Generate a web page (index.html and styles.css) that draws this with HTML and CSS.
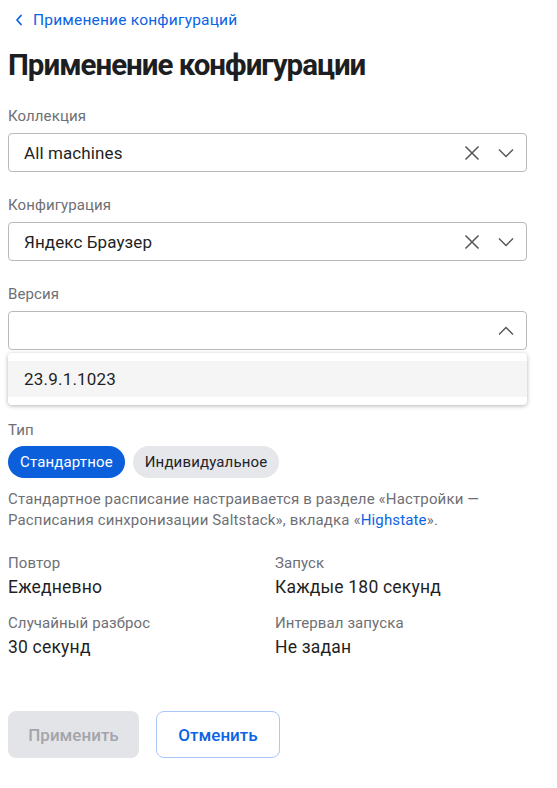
FILE: index.html
```
<!DOCTYPE html>
<html lang="ru">
<head>
<meta charset="utf-8">
<link rel="stylesheet" href="styles.css">
</head>
<body>
<div class="page">
  <a class="back" href="#">
    <svg class="back-ico" width="8" height="12" viewBox="0 0 8 12"><path d="M6 1.5L2 6l4 4.5" fill="none" stroke="currentColor" stroke-width="1.8" stroke-linecap="round" stroke-linejoin="round"/></svg>
    <span>Применение конфигураций</span>
  </a>
  <h1 class="title">Применение конфигурации</h1>

  <div class="field">
    <div class="label">Коллекция</div>
    <div class="select">
      <span class="value">All machines</span>
      <span class="icons">
        <svg width="16" height="16" viewBox="0 0 16 16"><path d="M1.5 1.5l13 13M14.5 1.5l-13 13" stroke="#555" stroke-width="1.5" fill="none"/></svg>
        <svg width="16" height="10" viewBox="0 0 16 10"><path d="M1 1.5l7 7 7-7" stroke="#555" stroke-width="1.4" fill="none"/></svg>
      </span>
    </div>
  </div>

  <div class="field">
    <div class="label">Конфигурация</div>
    <div class="select">
      <span class="value">Яндекс Браузер</span>
      <span class="icons">
        <svg width="16" height="16" viewBox="0 0 16 16"><path d="M1.5 1.5l13 13M14.5 1.5l-13 13" stroke="#555" stroke-width="1.5" fill="none"/></svg>
        <svg width="16" height="10" viewBox="0 0 16 10"><path d="M1 1.5l7 7 7-7" stroke="#555" stroke-width="1.4" fill="none"/></svg>
      </span>
    </div>
  </div>

  <div class="field field-open">
    <div class="label">Версия</div>
    <div class="select">
      <span class="value"></span>
      <span class="icons">
        <svg width="16" height="10" viewBox="0 0 16 10"><path d="M1 8.5l7-7 7 7" stroke="#555" stroke-width="1.4" fill="none"/></svg>
      </span>
    </div>
    <div class="menu">
      <div class="menu-item">23.9.1.1023</div>
    </div>
  </div>

  <div class="type">
    <div class="label">Тип</div>
    <div class="pills">
      <span class="pill pill-active">Стандартное</span>
      <span class="pill">Индивидуальное</span>
    </div>
  </div>

  <p class="note">Стандартное расписание настраивается в разделе «Настройки — Расписания синхронизации Saltstack», вкладка «<a href="#">Highstate</a>».</p>

  <div class="grid">
    <div class="item"><div class="ilabel">Повтор</div><div class="ivalue">Ежедневно</div></div>
    <div class="item"><div class="ilabel">Запуск</div><div class="ivalue">Каждые 180 секунд</div></div>
    <div class="item"><div class="ilabel">Случайный разброс</div><div class="ivalue">30 секунд</div></div>
    <div class="item"><div class="ilabel">Интервал запуска</div><div class="ivalue">Не задан</div></div>
  </div>

  <div class="buttons">
    <button class="btn btn-disabled">Применить</button>
    <button class="btn btn-outline">Отменить</button>
  </div>
</div>
</body>
</html>
```
FILE: styles.css
```
* { box-sizing: border-box; }
html, body { margin: 0; padding: 0; background: #fff; }
body { font-family: Roboto, "Noto Sans", sans-serif; color: #1f1f24; }
.page { padding: 8px 30px 0 8px; width: 557px; }

.back { display: flex; align-items: center; gap: 10px; color: #0b63e5; text-decoration: none; font-size: 15.5px; font-weight: 400; line-height: 24px; padding-left: 7px; height: 24px; letter-spacing: 0.2px; }
.back-ico { display: block; }

.title { margin: 13px 0 0; font-size: 29.5px; font-weight: 700; letter-spacing: -1px; line-height: 40px; color: #1d1e22; }

.field { margin-top: 21px; position: relative; }
.field + .field { margin-top: 23px; }
.label { font-size: 15px; color: #6e6f75; line-height: 21px; letter-spacing: 0.1px; }
.select { margin-top: 6px; height: 39px; border: 1px solid #b9babf; border-radius: 4px; display: flex; align-items: center; padding: 0 12px 0 15px; }
.value { flex: 1; font-size: 17px; color: #1f1f24; letter-spacing: 0.1px; }
.icons { display: flex; align-items: center; gap: 18px; }
.icons svg { display: block; }

.menu { margin-top: 3px; border-radius: 4px; box-shadow: 0 1px 4px rgba(0,0,0,0.3); padding: 8px 0; background: #fff; }
.menu-item { background: #f5f5f5; height: 36px; line-height: 36px; padding-left: 16px; font-size: 17px; color: #1f1f24; letter-spacing: 0.2px; }

.type { margin-top: 15px; }
.pills { margin-top: 5px; display: flex; gap: 8px; }
.pill { height: 32px; line-height: 32px; padding: 0 12px; border-radius: 16px; background: #e6e7eb; font-size: 15px; color: #222328; font-weight: 400; letter-spacing: 0.15px; }
.pill-active { background: #0b5fdb; color: #fff; }

.note { margin: 11px 0 0; font-size: 15px; line-height: 21px; color: #6e6f75; letter-spacing: 0.15px; }
.note a { color: #0b63e5; text-decoration: none; }

.grid { margin-top: 22px; display: grid; grid-template-columns: 267px 1fr; row-gap: 14px; }
.ilabel { font-size: 15px; color: #6e6f75; line-height: 20px; letter-spacing: 0.1px; }
.ivalue { font-size: 17.5px; color: #1f1f24; line-height: 24px; margin-top: 2px; font-weight: 400; letter-spacing: 0.2px; }

.buttons { margin-top: 52px; display: flex; gap: 17px; }
.btn { height: 47px; border-radius: 8px; font-family: inherit; font-size: 17px; font-weight: 500; padding: 0; border: 1px solid transparent; }
.btn-disabled { background: #e3e4e8; color: #a4a5aa; width: 131px; }
.btn-outline { background: #fff; border-color: #a9c8f8; color: #0b63e5; width: 124px; }
```
